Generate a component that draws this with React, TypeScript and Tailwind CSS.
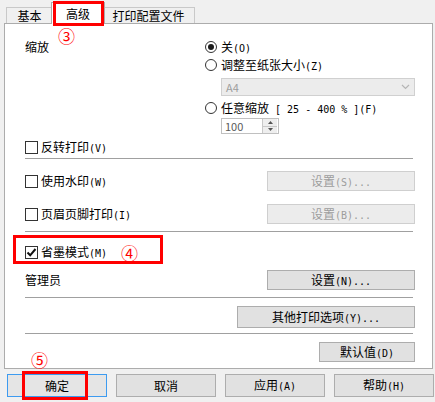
import type { ReactNode } from "react";

// ASCII runs are drawn in a narrow mono face, CJK in Noto Sans CJK
function Tx({ s }: { s: string }) {
  const parts = s.split(/([\x20-\x7e]+)/).filter(Boolean);
  return (
    <span className="whitespace-pre">
      {parts.map((p, i) =>
        /^[\x20-\x7e]+$/.test(p) ? (
          <span key={i} className="font-['DejaVu_Sans_Mono',monospace] text-[10px]">
            {p}
          </span>
        ) : (
          <span key={i}>{p}</span>
        ),
      )}
    </span>
  );
}

const Radio = ({ checked }: { checked?: boolean }) => (
  <span className="flex h-[12px] w-[12px] shrink-0 items-center justify-center rounded-full border border-[#333333] bg-white">
    {checked && <span className="h-[6px] w-[6px] rounded-full bg-[#1a1a1a]" />}
  </span>
);

const Checkbox = ({ checked }: { checked?: boolean }) => (
  <span className="flex h-[13px] w-[13px] shrink-0 items-center justify-center border border-[#333333] bg-white">
    {checked && (
      <svg width="11" height="11" viewBox="0 0 11 11">
        <path d="M1.5 5.5 L4.2 8.3 L9.5 2" fill="none" stroke="#111" strokeWidth="2" />
      </svg>
    )}
  </span>
);

function Btn({
  children,
  className = "",
  disabled,
  primary,
}: {
  children: ReactNode;
  className?: string;
  disabled?: boolean;
  primary?: boolean;
}) {
  const tone = disabled
    ? "border-[#cfcfcf] bg-[#ececec] text-[#9d9d9d]"
    : primary
      ? "border-[#3d9bf0] bg-[#e5e5e5] text-black"
      : "border-[#adadad] bg-[#e1e1e1] text-black";
  return (
    <div
      className={`flex shrink-0 items-center justify-center border text-[12px] leading-none ${tone} ${className}`}
    >
      {children}
    </div>
  );
}

const Sep = ({ className = "" }: { className?: string }) => (
  <div className={`mr-[2px] h-px bg-[#a0a0a0] ${className}`} />
);

export default function App() {
  return (
    <div className="relative h-[402px] w-[435px] overflow-hidden bg-[#f0f0f0] font-['Noto_Sans_CJK_SC','Microsoft_YaHei',sans-serif] text-[12px] text-black">
      {/* Tabs */}
      <div className="flex h-[23px] items-end pl-[6px]">
        <div className="flex h-[16px] w-[47px] items-center justify-center border border-b-0 border-[#c9c9c9] bg-[#f0f0f0] leading-none">
          基本
        </div>
        <div className="relative z-10 -mx-[2px] -mb-px flex h-[22px] w-[54px] items-start justify-center border border-b-0 border-[#acacac] bg-white pt-[5px] leading-none">
          高级
        </div>
        <div className="flex h-[16px] w-[92px] items-center justify-center border border-b-0 border-l-0 border-[#c9c9c9] bg-[#f0f0f0] leading-none">
          打印配置文件
        </div>
      </div>

      {/* Panel */}
      <div className="ml-[4px] flex h-[346px] w-[429px] flex-col border border-[#acacac] bg-white pl-[20px] pr-[17px] pt-[14px]">
        {/* Scale */}
        <div className="flex">
          <div className="flex h-[18px] w-[180px] items-center leading-none">缩放</div>
          <div className="flex flex-1 flex-col">
            <div className="flex h-[18px] items-center gap-[4px] leading-none">
              <Radio checked />
              <Tx s="关(O)" />
            </div>
            <div className="flex h-[18px] items-center gap-[4px] leading-none">
              <Radio />
              <Tx s="调整至纸张大小(Z)" />
            </div>
            <div className="ml-[16px] mt-[4px] flex h-[18px] items-center justify-between border border-[#d0d0d0] bg-[#ececec] pl-[4px] pr-[4px] leading-none text-[#9d9d9d]">
              <span className="text-[11px]">A4</span>
              <svg width="9" height="6" viewBox="0 0 9 6">
                <path d="M1 1 L4.5 4.5 L8 1" fill="none" stroke="#b5b5b5" strokeWidth="1.2" />
              </svg>
            </div>
            <div className="mt-[3px] flex h-[18px] items-center gap-[4px] leading-none">
              <Radio />
              <Tx s="任意缩放 [ 25 - 400 % ](F)" />
            </div>
            <div className="ml-[16px] mt-[1px] flex h-[16px] w-[58px] items-center border border-[#c0c0c0] bg-white leading-none">
              <span className="flex-1 pl-[3px] text-[11px] text-[#5a5a5a]">100</span>
              <div className="mr-px flex h-[14px] w-[15px] flex-col border-l border-[#c8c8c8] bg-[#eeeeee]">
                <div className="flex flex-1 items-center justify-center border-b border-[#c8c8c8]">
                  <svg width="5" height="3" viewBox="0 0 5 3">
                    <path d="M0 3 L2.5 0 L5 3 Z" fill="#555" />
                  </svg>
                </div>
                <div className="flex flex-1 items-center justify-center">
                  <svg width="5" height="3" viewBox="0 0 5 3">
                    <path d="M0 0 L2.5 3 L5 0 Z" fill="#555" />
                  </svg>
                </div>
              </div>
            </div>
          </div>
        </div>

        <div className="mt-[4px] flex h-[18px] items-center gap-[3px] leading-none">
          <Checkbox />
          <Tx s="反转打印(V)" />
        </div>
        <Sep className="mt-[2px]" />

        <div className="mt-[12px] flex items-center justify-between">
          <div className="flex items-center gap-[3px] leading-none">
            <Checkbox />
            <Tx s="使用水印(W)" />
          </div>
          <Btn disabled className="h-[20px] w-[148px]">
            <Tx s="设置(S)..." />
          </Btn>
        </div>
        <div className="mt-[13px] flex items-center justify-between">
          <div className="flex items-center gap-[3px] leading-none">
            <Checkbox />
            <Tx s="页眉页脚打印(I)" />
          </div>
          <Btn disabled className="h-[20px] w-[148px]">
            <Tx s="设置(B)..." />
          </Btn>
        </div>
        <Sep className="mt-[7px]" />

        <div className="mt-[11px] flex h-[18px] items-center gap-[3px] leading-none">
          <Checkbox checked />
          <Tx s="省墨模式(M)" />
        </div>
        <div className="mt-[9px] flex items-center justify-between">
          <span className="leading-none">管理员</span>
          <Btn className="h-[20px] w-[148px]">
            <Tx s="设置(N)..." />
          </Btn>
        </div>
        <Sep className="mt-[7px]" />

        <div className="mt-[8px] flex justify-end">
          <Btn className="h-[22px] w-[178px]">
            <Tx s="其他打印选项(Y)..." />
          </Btn>
        </div>
        <Sep className="mt-[5px]" />
        <div className="mt-[8px] flex justify-end">
          <Btn className="h-[20px] w-[96px]">
            <Tx s="默认值(D)" />
          </Btn>
        </div>
      </div>

      {/* Dialog buttons */}
      <div className="mt-[5px] flex gap-[9px] pl-[7px]">
        <Btn primary className="h-[23px] w-[100px]">确定</Btn>
        <Btn className="h-[23px] w-[100px]">取消</Btn>
        <Btn className="h-[23px] w-[100px]">
          <Tx s="应用(A)" />
        </Btn>
        <Btn className="h-[23px] w-[100px]">
          <Tx s="帮助(H)" />
        </Btn>
      </div>

      {/* Annotations */}
      <div className="absolute left-[53px] top-[1px] z-20 h-[25px] w-[51px] border-[3px] border-[#ff0000]" />
      <span className="absolute left-[58px] top-[27px] z-20 text-[17px] leading-none text-[#ff0000]">③</span>
      <div className="absolute left-[13px] top-[235px] z-20 h-[29px] w-[150px] border-[3px] border-[#ff0000]" />
      <span className="absolute left-[121px] top-[244px] z-20 text-[17px] leading-none text-[#ff0000]">④</span>
      <span className="absolute left-[31px] top-[351px] z-20 text-[17px] leading-none text-[#ff0000]">⑤</span>
      <div className="absolute left-[22px] top-[371px] z-20 h-[29px] w-[66px] border-[3px] border-[#ff0000]" />
    </div>
  );
}
